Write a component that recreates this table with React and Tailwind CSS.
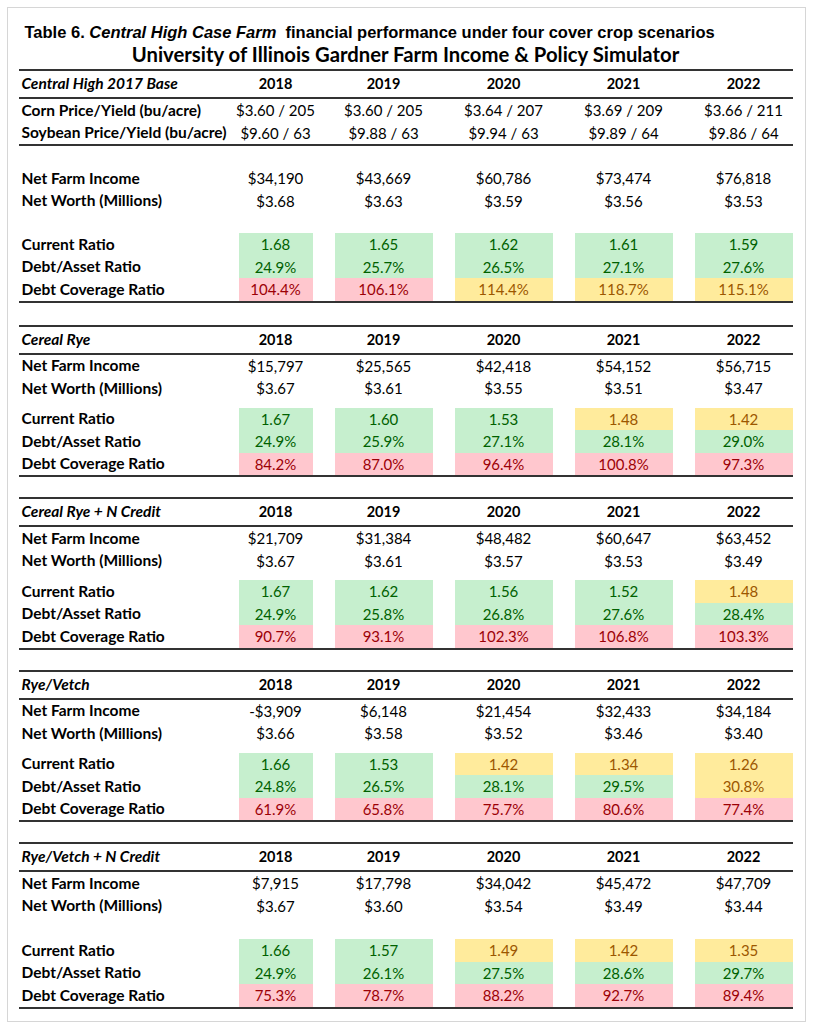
import React from "react";

const COLS = ["w-[74px]", "w-[98px]", "w-[98px]", "w-[98px]", "w-[98px]"];
const TONE = {
  g: "bg-[#c6efce] text-[#006100]",
  y: "bg-[#ffeb9c] text-[#9c5700]",
  r: "bg-[#ffc7ce] text-[#9c0006]",
};

const FONT = { fontFamily: "Lato, 'Open Sans', sans-serif" };

function Line() {
  return <div className="h-[2px] bg-[#333333]" />;
}

function Row({ label, values, tones, h = "h-[22.5px]", labelClass = "font-bold text-[15.5px]", valueClass = "text-[15px]" }) {
  return (
    <div className={`flex items-stretch ${h}`}>
      <div className={`w-[220px] pl-[3px] flex items-center whitespace-nowrap ${labelClass}`}>{label}</div>
      <div className="flex gap-[22px]">
        {values.map((v, i) => (
          <div
            key={i}
            className={`${COLS[i]} flex items-center justify-center whitespace-nowrap ${valueClass} ${tones ? TONE[tones[i]] : ""}`}
          >
            {v}
          </div>
        ))}
      </div>
    </div>
  );
}

const YEARS = ["2018", "2019", "2020", "2021", "2022"];

function Header({ title }) {
  return (
    <Row
      label={title}
      values={YEARS}
      h="h-[26px]"
      labelClass="font-bold italic text-[15.5px]"
      valueClass="font-bold text-[14.5px]"
    />
  );
}

function Section({ s, topGap, midGap, colorGap }) {
  return (
    <div className={topGap}>
      <Line />
      <Header title={s.title} />
      <Line />
      {s.extra && (
        <>
          {s.extra.map((r, i) => (
            <Row key={i} label={r[0]} values={r[1]} />
          ))}
          <Line />
        </>
      )}
      <div className={midGap}>
        <Row label="Net Farm Income" values={s.nfi} />
        <Row label="Net Worth (Millions)" values={s.nw} />
      </div>
      <div className={colorGap}>
        <Row label="Current Ratio" values={s.cr[0]} tones={s.cr[1]} />
        <Row label="Debt/Asset Ratio" values={s.da[0]} tones={s.da[1]} />
        <Row label="Debt Coverage Ratio" values={s.dc[0]} tones={s.dc[1]} />
      </div>
      <Line />
    </div>
  );
}

const SECTIONS = [
  {
    title: "Central High 2017 Base",
    extra: [
      ["Corn Price/Yield (bu/acre)", ["$3.60 / 205", "$3.60 / 205", "$3.64 / 207", "$3.69 / 209", "$3.66 / 211"]],
      ["Soybean Price/Yield (bu/acre)", ["$9.60 / 63", "$9.88 / 63", "$9.94 / 63", "$9.89 / 64", "$9.86 / 64"]],
    ],
    nfi: ["$34,190", "$43,669", "$60,786", "$73,474", "$76,818"],
    nw: ["$3.68", "$3.63", "$3.59", "$3.56", "$3.53"],
    cr: [["1.68", "1.65", "1.62", "1.61", "1.59"], "ggggg"],
    da: [["24.9%", "25.7%", "26.5%", "27.1%", "27.6%"], "ggggg"],
    dc: [["104.4%", "106.1%", "114.4%", "118.7%", "115.1%"], "rryyy"],
  },
  {
    title: "Cereal Rye",
    nfi: ["$15,797", "$25,565", "$42,418", "$54,152", "$56,715"],
    nw: ["$3.67", "$3.61", "$3.55", "$3.51", "$3.47"],
    cr: [["1.67", "1.60", "1.53", "1.48", "1.42"], "gggyy"],
    da: [["24.9%", "25.9%", "27.1%", "28.1%", "29.0%"], "ggggg"],
    dc: [["84.2%", "87.0%", "96.4%", "100.8%", "97.3%"], "rrrrr"],
  },
  {
    title: "Cereal Rye + N Credit",
    nfi: ["$21,709", "$31,384", "$48,482", "$60,647", "$63,452"],
    nw: ["$3.67", "$3.61", "$3.57", "$3.53", "$3.49"],
    cr: [["1.67", "1.62", "1.56", "1.52", "1.48"], "ggggy"],
    da: [["24.9%", "25.8%", "26.8%", "27.6%", "28.4%"], "ggggg"],
    dc: [["90.7%", "93.1%", "102.3%", "106.8%", "103.3%"], "rrrrr"],
  },
  {
    title: "Rye/Vetch",
    nfi: ["-$3,909", "$6,148", "$21,454", "$32,433", "$34,184"],
    nw: ["$3.66", "$3.58", "$3.52", "$3.46", "$3.40"],
    cr: [["1.66", "1.53", "1.42", "1.34", "1.26"], "ggyyy"],
    da: [["24.8%", "26.5%", "28.1%", "29.5%", "30.8%"], "ggggy"],
    dc: [["61.9%", "65.8%", "75.7%", "80.6%", "77.4%"], "rrrrr"],
  },
  {
    title: "Rye/Vetch + N Credit",
    nfi: ["$7,915", "$17,798", "$34,042", "$45,472", "$47,709"],
    nw: ["$3.67", "$3.60", "$3.54", "$3.49", "$3.44"],
    cr: [["1.66", "1.57", "1.49", "1.42", "1.35"], "ggyyy"],
    da: [["24.9%", "26.1%", "27.5%", "28.6%", "29.7%"], "ggggg"],
    dc: [["75.3%", "78.7%", "88.2%", "92.7%", "89.4%"], "rrrrr"],
  },
];

export default function App() {
  return (
    <div className="w-[813px] h-[1024px] bg-white p-[7px]">
      <div className="w-[799px] h-[1015px] border-[1.5px] border-[#d6d6d6] pl-[10.5px] pt-[13px]">
        <div
          className="pl-[6px] text-[16.5px] leading-[22px] font-bold text-black whitespace-nowrap"
          style={{ fontFamily: "'Liberation Sans Narrow', 'Arial Narrow', 'Liberation Sans', sans-serif" }}
        >
          Table 6. <span className="italic">Central High Case Farm</span>&nbsp; financial performance under four cover crop scenarios
        </div>
        <div
          className="w-[774px] text-center text-[20.3px] leading-[22px] font-bold text-black whitespace-nowrap"
          style={FONT}
        >
          University of Illinois Gardner Farm Income &amp; Policy Simulator
        </div>
        <div className="w-[774px] mt-[4px] text-black" style={FONT}>
          <Section s={SECTIONS[0]} topGap="" midGap="pt-[21px]" colorGap="pt-[21px]" />
          <Section s={SECTIONS[1]} topGap="mt-[22px]" midGap="" colorGap="pt-[8px]" />
          <Section s={SECTIONS[2]} topGap="mt-[20px]" midGap="" colorGap="pt-[8px]" />
          <Section s={SECTIONS[3]} topGap="mt-[20px]" midGap="" colorGap="pt-[8px]" />
          <Section s={SECTIONS[4]} topGap="mt-[20px]" midGap="" colorGap="pt-[22px]" />
        </div>
      </div>
    </div>
  );
}
